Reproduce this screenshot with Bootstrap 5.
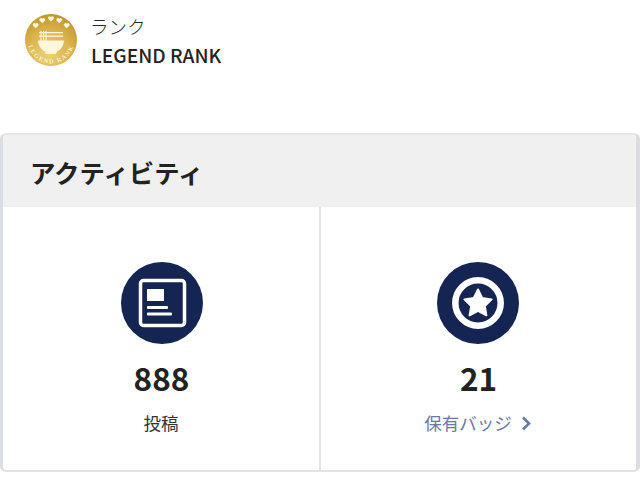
<!DOCTYPE html>
<html lang="ja">
<head>
<meta charset="utf-8">
<title>アクティビティ</title>
<link href="https://cdn.jsdelivr.net/npm/bootstrap@5.3.0/dist/css/bootstrap.min.css" rel="stylesheet">
<style>
html,body{margin:0;background:#fff;overflow:hidden}
body{width:640px;height:487px;font-family:"Noto Sans CJK JP","Noto Sans",sans-serif;color:#222}
.rank-row{height:133px;padding:14px 0 0 25px;gap:13px}
.rank-logo{width:52px;height:52px;display:block}
.rank-label{font-size:18.5px;line-height:24px;font-weight:300;margin-top:0;color:#2a2a2a}
.rank-name{font-size:19.2px;line-height:24px;margin-top:5px;margin-left:1px;font-weight:500;color:#222}
.act-card{width:640px;height:339px;border-width:2px 4px 2px 3px;border-style:solid;border-color:#e6e6e8 #dcdde2 #e3e3e6 #dcdde2;border-radius:6px;background:#fff;overflow:hidden}
.act-head{height:72px;background:#f0f0f0;padding:0 0 0 27px;font-size:25.4px;font-weight:700;line-height:74px;color:#222}
.act-cell{height:263px;padding-top:55px}
.act-cell-first{flex:0 0 318px;border-right:2px solid #e3e3e6}
.act-cell-first .act-icon{margin-left:2px}
.act-cell-last{flex:1 1 auto}
.act-cell-last .act-icon{margin-right:2px}
.act-icon{width:82px;height:82px;display:block}
.act-num{font-size:31.5px;line-height:42px;font-weight:700;margin-top:12px;color:#222}
.act-cell-first .act-num{margin-left:1px}
.act-cap{font-size:17.5px;line-height:24px;margin-top:13px;font-weight:400;color:#333}
.act-link{color:#6b77ad;text-decoration:none;margin-right:2px}
.act-chev{width:10px;height:15px;margin-left:9px;vertical-align:-1px}
</style>
</head>
<body>
<div class="d-flex align-items-start rank-row">
  <svg class="rank-logo flex-shrink-0" viewBox="0 0 52 52" role="img" aria-label="LEGEND RANK">
    <defs>
      <radialGradient id="gold" cx=".45" cy=".75" r=".85">
        <stop offset="0" stop-color="#ecd27c"/>
        <stop offset=".55" stop-color="#d8b048"/>
        <stop offset="1" stop-color="#b88e24"/>
      </radialGradient>
      <path id="arc" d="M2.500 26a23.500 23.500 0 0 0 47 0"/>
      <path id="ht" d="M0 2.600l-2.600-2.600a1.500 1.500 0 0 1 2.600-2a1.500 1.500 0 0 1 2.600 2z"/>
    </defs>
    <circle cx="26" cy="26" r="26" fill="url(#gold)"/>
    <g fill="#fff6dc">
      <use href="#ht" x="10.700" y="11.700"/>
      <use href="#ht" x="17.300" y="6.700"/>
      <use href="#ht" x="26" y="5"/>
      <use href="#ht" x="34.300" y="6.700"/>
      <use href="#ht" x="41.700" y="11.700"/>
      <path d="M13 26.500h26a13 13 0 0 1-7 11l-1 2.500h-10l-1-2.500a13 13 0 0 1-7-11z"/>
      <rect x="14" y="18" width="24" height="1.300"/>
      <rect x="14" y="21.500" width="24" height="1.300"/>
      <rect x="15.500" y="17" width="1.100" height="10"/>
      <rect x="18" y="17" width="1.100" height="10"/>
      <rect x="20.500" y="17" width="1.100" height="10"/>
    </g>
    <text font-size="6.500" font-weight="700" fill="#fff2c8" font-family="Liberation Serif,serif" letter-spacing="1.200"><textPath href="#arc" startOffset="50%" text-anchor="middle">LEGEND RANK</textPath></text>
  </svg>
  <div>
    <div class="rank-label">ランク</div>
    <div class="rank-name">LEGEND RANK</div>
  </div>
</div>
<section class="act-card">
  <div class="act-head">アクティビティ</div>
  <div class="d-flex">
    <div class="act-cell act-cell-first d-flex flex-column align-items-center text-center">
      <svg class="act-icon" viewBox="0 0 82 82" aria-hidden="true">
        <circle cx="41" cy="41" r="41" fill="#142453"/>
        <rect x="19.500" y="18.500" width="44" height="45" rx="3" fill="none" stroke="#fff" stroke-width="3.500"/>
        <rect x="26" y="27" width="17" height="12" rx=".5" fill="#fff"/>
        <rect x="26" y="44" width="21" height="3" rx="1" fill="#fff"/>
        <rect x="26" y="50.500" width="25" height="3" rx="1" fill="#fff"/>
      </svg>
      <div class="act-num">888</div>
      <div class="act-cap">投稿</div>
    </div>
    <div class="act-cell act-cell-last d-flex flex-column align-items-center text-center">
      <svg class="act-icon" viewBox="0 0 82 82" aria-hidden="true">
        <circle cx="41" cy="41" r="41" fill="#142453"/>
        <circle cx="41" cy="41" r="22.700" fill="none" stroke="#fff" stroke-width="6.500"/>
        <path d="M41 27.500l4.200 8.500 9.400 1.400-6.800 6.600 1.600 9.300-8.400-4.400-8.400 4.400 1.600-9.300-6.800-6.600 9.400-1.400z" fill="#fff" stroke="#fff" stroke-width="2" stroke-linejoin="round"/>
      </svg>
      <div class="act-num">21</div>
      <div class="act-cap"><a class="act-link d-inline-block" href="#">保有バッジ<svg class="act-chev" viewBox="0 0 10 15" aria-hidden="true"><path d="M2 1.500l6 6-6 6" fill="none" stroke="#6b77ad" stroke-width="2.600"/></svg></a></div>
    </div>
  </div>
</section>
</body>
</html>
